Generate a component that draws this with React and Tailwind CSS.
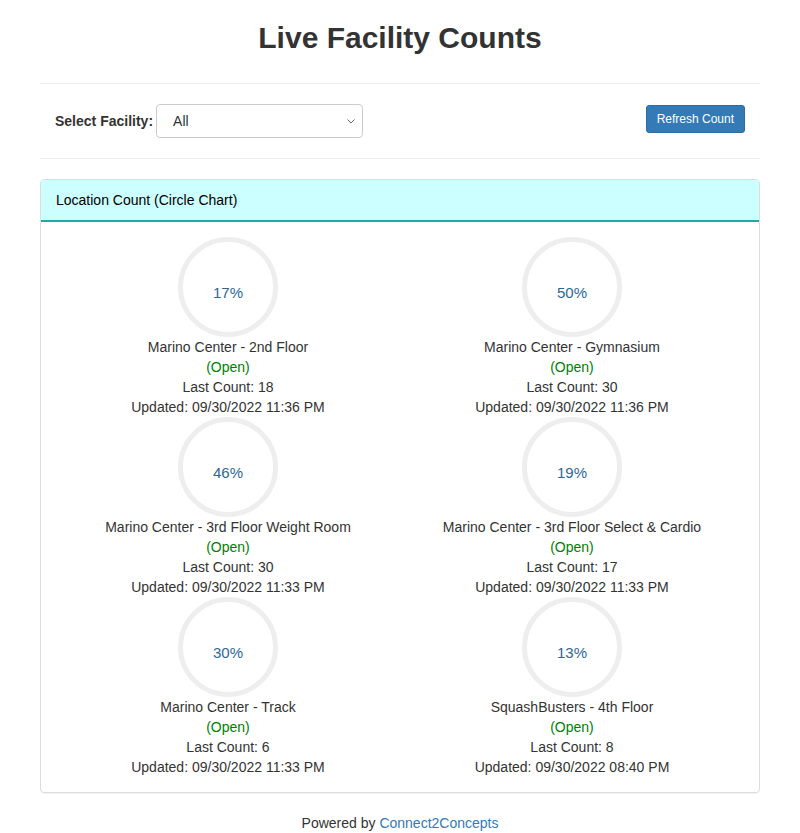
const FACILITIES = [
  { name: 'Marino Center - 2nd Floor', pct: 17, count: 18, updated: '09/30/2022 11:36 PM' },
  { name: 'Marino Center - Gymnasium', pct: 50, count: 30, updated: '09/30/2022 11:36 PM' },
  { name: 'Marino Center - 3rd Floor Weight Room', pct: 46, count: 30, updated: '09/30/2022 11:33 PM' },
  { name: 'Marino Center - 3rd Floor Select & Cardio', pct: 19, count: 17, updated: '09/30/2022 11:33 PM' },
  { name: 'Marino Center - Track', pct: 30, count: 6, updated: '09/30/2022 11:33 PM' },
  { name: 'SquashBusters - 4th Floor', pct: 13, count: 8, updated: '09/30/2022 08:40 PM' },
];

function CountCircle({ facility }) {
  return (
    <div className="flex flex-col items-center text-center">
      <div className="w-[100px] h-[100px] rounded-full border-[5px] border-[#eeeeee] flex items-center justify-center pt-3">
        <span className="text-[15px] text-[#2d6796]">{facility.pct}%</span>
      </div>
      <div className="text-[14px] leading-[20px] text-[#333]">
        <div>{facility.name}</div>
        <div className="text-[#008000]">(Open)</div>
        <div>Last Count: {facility.count}</div>
        <div>Updated: {facility.updated}</div>
      </div>
    </div>
  );
}

export default function App() {
  return (
    <div className="bg-white min-h-[833px] font-['Liberation_Sans',Arial,sans-serif] text-[#333]">
      <div className="px-10">
        <h1 className="text-center text-[30px] leading-[33px] font-bold pt-[21px] pb-[29px]">Live Facility Counts</h1>

        <div className="border-t border-[#eee]" />

        {/* Facility picker + refresh */}
        <div className="flex items-center justify-between px-[15px] py-5">
          <div className="flex items-center gap-[3px]">
            <label className="text-[14px] font-bold">Select Facility:</label>
            <div className="relative w-[207px] h-[34px] border border-[#ccc] rounded-[4px] flex items-center pl-4 text-[14px] text-[#333]">
              All
              <svg className="absolute right-[7px] top-[14px]" width="8" height="5" viewBox="0 0 8 5">
                <path d="M0.5 0.5 L4 4 L7.5 0.5" fill="none" stroke="#666" strokeWidth="1" />
              </svg>
            </div>
          </div>
          <button className="bg-[#337ab7] text-white text-[12px] h-[28px] px-[10px] rounded-[3px] border border-[#2e6da4] -mt-[4px]">
            Refresh Count
          </button>
        </div>

        <div className="border-t border-[#eee]" />

        {/* Circle chart panel */}
        <div className="mt-5 border border-[#ddd] rounded-[4px] overflow-hidden shadow-[0_1px_1px_rgba(0,0,0,0.05)]">
          <div className="bg-[#ccffff] border-b-2 border-[#20aba5] h-[42px] flex items-center px-[15px] text-[14px] text-[#000]">
            Location Count (Circle Chart)
          </div>
          <div className="grid grid-cols-2 p-[15px]">
            {FACILITIES.map(f => (
              <CountCircle key={f.name} facility={f} />
            ))}
          </div>
        </div>

        <div className="text-center text-[14px] pt-[20px] pb-2">
          Powered by <span className="text-[#337ab7]">Connect2Concepts</span>
        </div>
      </div>
    </div>
  );
}
